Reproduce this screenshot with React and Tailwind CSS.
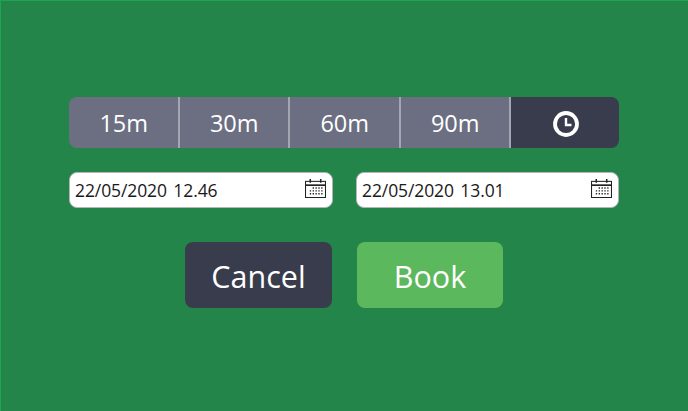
import React from 'react';

const DURATIONS = ['15m', '30m', '60m', '90m'];

const CalendarIcon = () => (
  <svg width="21" height="19" viewBox="0 0 22 20" fill="none" stroke="#222" strokeWidth="1.1" className="shrink-0 mt-[-3px]">
    <rect x="0.5" y="2.5" width="21" height="17" />
    <path d="M0.5 6.5h21" strokeWidth="1.8" />
    <path d="M5.5 0v4M16.5 0v4" strokeWidth="1.6" />
    <path
      d="M8 9.5h1.4M11 9.5h1.4M14 9.5h1.4M17 9.5h1.4M5 12.5h1.4M8 12.5h1.4M11 12.5h1.4M14 12.5h1.4M17 12.5h1.4M5 15.5h1.4M8 15.5h1.4M11 15.5h1.4M14 15.5h1.4M17 15.5h1.4"
      strokeWidth="1.5"
    />
  </svg>
);

const ClockIcon = () => (
  <svg width="26" height="26" viewBox="0 0 26 26" fill="none" stroke="white">
    <circle cx="13" cy="13" r="11" strokeWidth="3.8" />
    <path d="M13 7v7h5.5" strokeWidth="2.4" />
  </svg>
);

const DateInput = ({ value, className }) => (
  <div className={`h-[36px] bg-white rounded-lg border border-[#b5b5b5] flex items-center justify-between pl-[5px] pr-[6px] ${className}`}>
    <span className="text-[17.5px] tracking-[-0.1px] [word-spacing:2px] text-[#1a1a1a] whitespace-pre">{value}</span>
    <CalendarIcon />
  </div>
);

export default function App() {
  return (
    <div
      className="w-[688px] h-[411px] bg-[#24854b] border-t border-l border-[#1fa552] flex flex-col items-center pt-[96px] overflow-hidden"
      style={{ fontFamily: '"Open Sans", "Noto Sans", sans-serif' }}
    >
      <div className="w-[550px] h-[51px] flex rounded-lg overflow-hidden ml-[-1px]">
        {DURATIONS.map((d) => (
          <div
            key={d}
            className="w-[110.5px] bg-[#6c6f82] border-r-2 border-[#a3a5b0] flex items-center justify-center text-white text-[23.5px] pt-[2px] pl-[1px]"
          >
            {d}
          </div>
        ))}
        <div className="flex-1 bg-[#383c4c] flex items-center justify-center pt-[3px] pl-[2px]">
          <ClockIcon />
        </div>
      </div>

      <div className="w-[550px] flex justify-between mt-[24px] ml-[-1px]">
        <DateInput value="22/05/2020 12.46" className="w-[264px]" />
        <DateInput value="22/05/2020 13.01" className="w-[263px]" />
      </div>

      <div className="flex gap-[25px] mt-[34px] ml-[-1px]">
        <div className="w-[147px] h-[66px] rounded-lg bg-[#383c4c] text-white text-[30.5px] pt-[4px] flex items-center justify-center">
          Cancel
        </div>
        <div className="w-[146px] h-[66px] rounded-lg bg-[#5cb85c] text-white text-[30.5px] pt-[4px] flex items-center justify-center">
          Book
        </div>
      </div>
    </div>
  );
}
